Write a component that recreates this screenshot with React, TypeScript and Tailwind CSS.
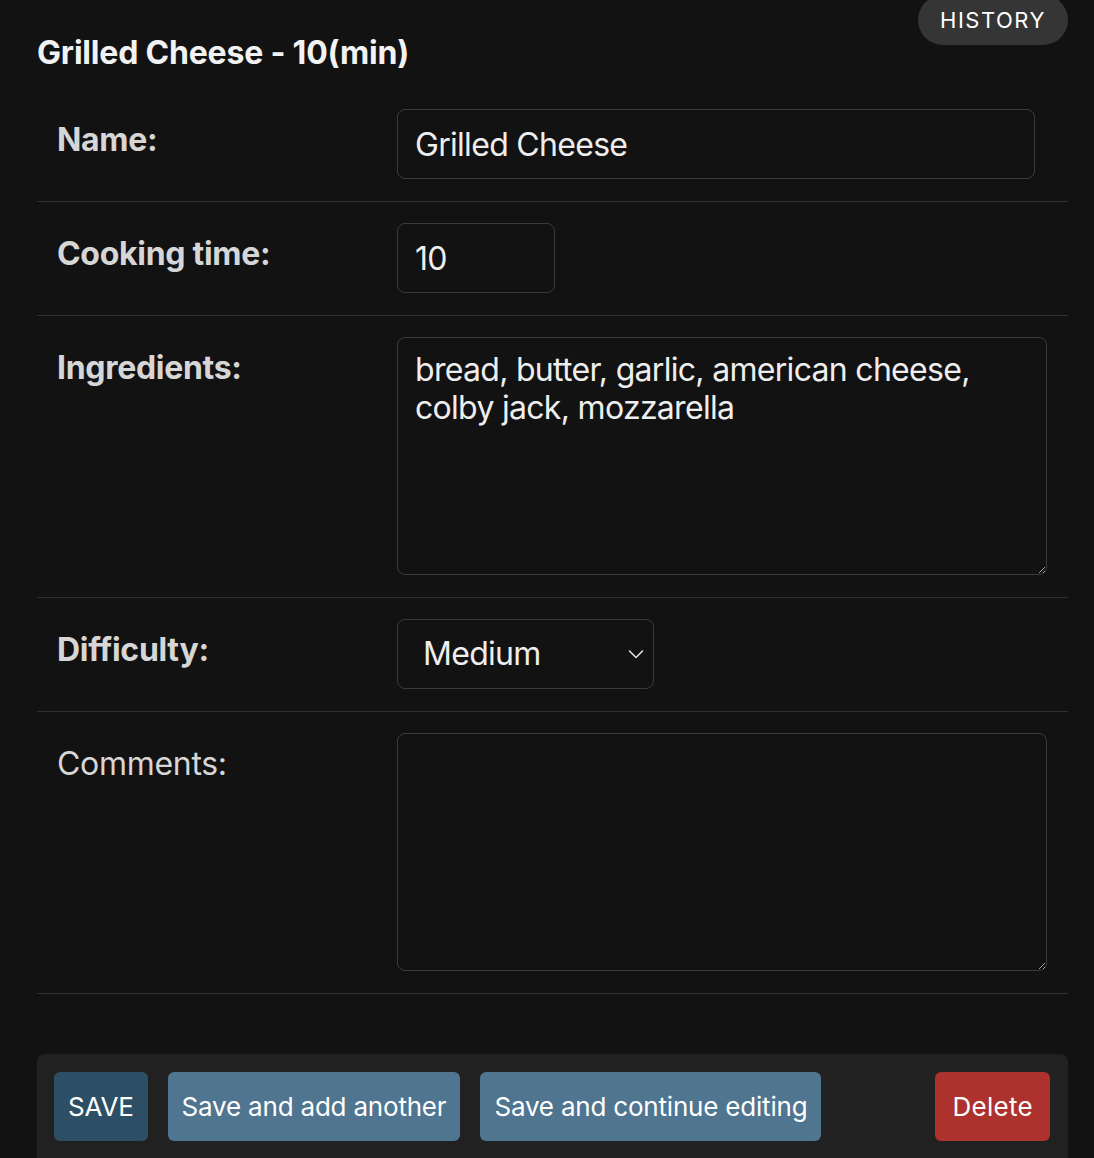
const font = { fontFamily: 'Inter, "Noto Sans", sans-serif' }

function Row({ label, bold = true, children }: { label: string; bold?: boolean; children: React.ReactNode }) {
  return (
    <div className="flex border-b border-[#303030] pb-[22px] pt-[21px]">
      <div className="w-[360px] shrink-0 pl-[20px] pt-[11px]">
        <label className={`text-[32px] leading-[40px] tracking-[-0.3px] text-[#d6d6d6] ${bold ? 'font-bold' : 'font-normal'}`}>
          {label}
        </label>
      </div>
      <div className="flex-1">{children}</div>
    </div>
  )
}

const field = 'rounded-[8px] border border-[#3a3a3a] bg-[#121212] text-[32px] tracking-[-0.7px] text-[#eeeeee] outline-none'

export default function App() {
  return (
    <div className="min-h-screen bg-[#121212] pl-[37px] pr-[26px] [color-scheme:dark]" style={font}>
      <div className="flex items-start justify-between">
        <h2 className="mt-[33px] text-[32px] font-bold leading-[40px] tracking-[-0.2px] text-[#f2f2f2]">Grilled Cheese - 10(min)</h2>
        <a className="-mt-[5px] flex h-[50px] w-[150px] items-center justify-center rounded-full bg-[#353535] text-[22px] tracking-[1.5px] text-white">
          HISTORY
        </a>
      </div>

      <div className="mt-[15px]">
        <Row label="Name:">
          <input defaultValue="Grilled Cheese" className={`h-[70px] w-[638px] px-[17px] leading-[40px] ${field}`} />
        </Row>
        <Row label="Cooking time:">
          <input defaultValue="10" className={`h-[70px] w-[158px] px-[17px] leading-[40px] ${field}`} />
        </Row>
        <Row label="Ingredients:">
          <textarea
            defaultValue="bread, butter, garlic, american cheese, colby jack, mozzarella"
            className={`block h-[238px] w-[650px] px-[17px] pt-[13px] leading-[38px] ${field}`}
          />
        </Row>
        <Row label="Difficulty:">
          <div className={`relative h-[70px] w-[257px] ${field}`}>
            <select
              defaultValue="medium"
              className="h-full w-full appearance-none bg-transparent pl-[25px] leading-[40px] outline-none"
            >
              <option value="easy">Easy</option>
              <option value="medium">Medium</option>
              <option value="hard">Hard</option>
            </select>
            <svg
              className="pointer-events-none absolute right-[9px] top-[29px]"
              width="16"
              height="10"
              viewBox="0 0 16 10"
              fill="none"
              stroke="#e0e0e0"
              strokeWidth="1.6"
              strokeLinecap="round"
              strokeLinejoin="round"
            >
              <polyline points="1.5,2 8,8.5 14.5,2" />
            </svg>
          </div>
        </Row>
        <Row label="Comments:" bold={false}>
          <textarea className={`block h-[238px] w-[650px] px-[17px] pt-[13px] leading-[38px] ${field}`} />
        </Row>
      </div>

      <div className="mt-[60px] flex items-center gap-[20px] rounded-[8px] bg-[#212121] px-[17px] pb-[30px] pt-[18px] text-[26px] tracking-[-0.2px] text-white">
        <button className="h-[69px] rounded-[6px] bg-[#2c4f65] px-[14px]">SAVE</button>
        <button className="h-[69px] rounded-[6px] bg-[#4f7590] px-[14px]">Save and add another</button>
        <button className="h-[69px] rounded-[6px] bg-[#4f7590] px-[14px]">Save and continue editing</button>
        <button className="ml-auto mr-[1px] h-[69px] rounded-[6px] bg-[#ad312c] px-[17px] tracking-[0.3px]">Delete</button>
      </div>
    </div>
  )
}
